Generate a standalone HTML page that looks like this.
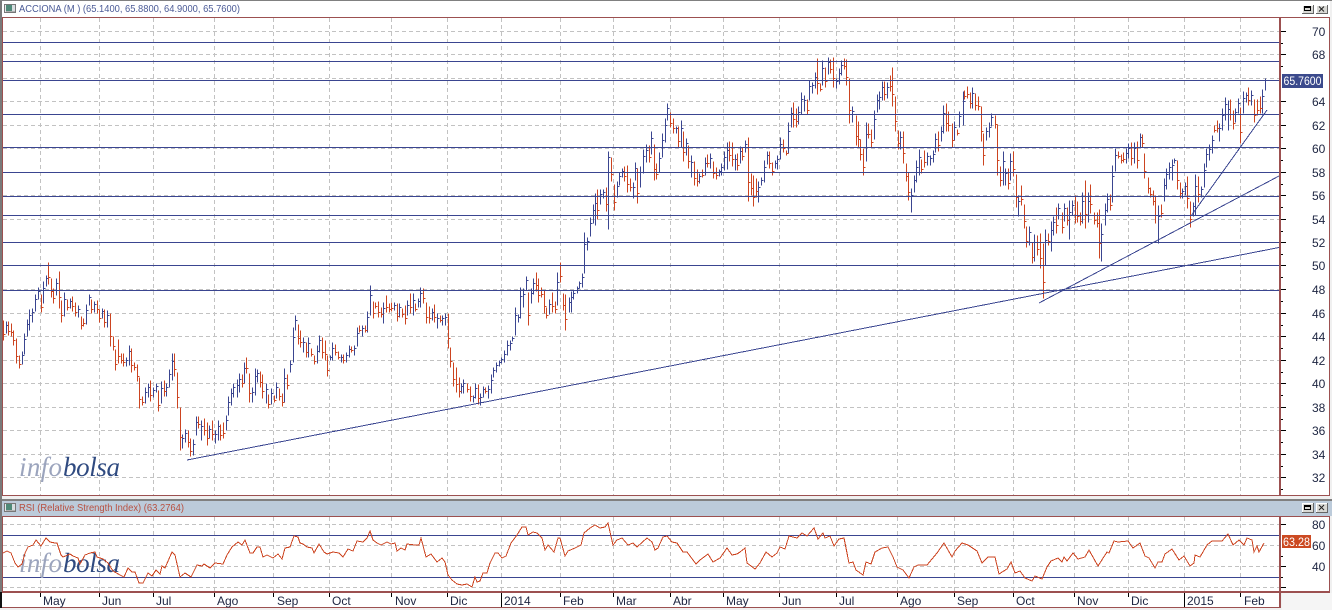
<!DOCTYPE html>
<html lang="es"><head><meta charset="utf-8"><title>ACCIONA</title>
<style>
html,body{margin:0;padding:0;background:#f0f0f0;width:1332px;height:610px;overflow:hidden}
svg{display:block;position:absolute;left:0;top:0;font-family:"Liberation Sans",sans-serif}
.ax{font-size:12px;fill:#1c2440}
.logo{font-family:"Liberation Serif",serif;font-style:italic;font-size:27px}
</style></head><body>
<svg width="1332" height="610" viewBox="0 0 1332 610" xmlns="http://www.w3.org/2000/svg">
<!-- panels -->
<rect x="0" y="0" width="1332" height="610" fill="#f0f0f0"/>
<rect x="0" y="0" width="1332" height="1" fill="#808080"/>
<rect x="0" y="1" width="1330" height="16" fill="#fff"/>
<rect x="2" y="17" width="1327" height="478" fill="#fff"/>
<rect x="0" y="499" width="1332" height="2" fill="#808080"/>
<rect x="0" y="501" width="1332" height="15" fill="#bccbda"/>
<rect x="2" y="517" width="1327" height="74" fill="#fff"/>
<rect x="2" y="593" width="1277" height="14" fill="#fff"/>
<!-- grid -->
<g stroke="#c2c2c2" stroke-width="1" fill="none" shape-rendering="crispEdges" stroke-dasharray="4 3">
<path d="M3 31.5H1279M3 54.5H1279M3 78.5H1279M3 101.5H1279M3 125.5H1279M3 148.5H1279M3 172.5H1279M3 195.5H1279M3 219.5H1279M3 242.5H1279M3 265.5H1279M3 289.5H1279M3 313.5H1279M3 336.5H1279M3 360.5H1279M3 383.5H1279M3 407.5H1279M3 430.5H1279M3 454.5H1279M3 477.5H1279"/>
<path d="M3 524.5H1279M3 545.5H1279M3 566.5H1279M3 587.5H1279"/>
<path d="M40.5 18V495M99.5 18V495M153.5 18V495M214.5 18V495M273.5 18V495M329.5 18V495M391.5 18V495M447.5 18V495M501.5 18V495M560.5 18V495M613.5 18V495M670.5 18V495M723.5 18V495M779.5 18V495M836.5 18V495M897.5 18V495M954.5 18V495M1013.5 18V495M1074.5 18V495M1128.5 18V495M1184.5 18V495M1240.5 18V495"/>
<path d="M40.5 517V591M99.5 517V591M153.5 517V591M214.5 517V591M273.5 517V591M329.5 517V591M391.5 517V591M447.5 517V591M501.5 517V591M560.5 517V591M613.5 517V591M670.5 517V591M723.5 517V591M779.5 517V591M836.5 517V591M897.5 517V591M954.5 517V591M1013.5 517V591M1074.5 517V591M1128.5 517V591M1184.5 517V591M1240.5 517V591"/>
</g>
<!-- logo main -->
<text class="logo" x="19" y="476" fill="#9ba4bd" textLength="43" lengthAdjust="spacing">info</text>
<text class="logo" x="63" y="476" fill="#2f4a80" textLength="57" lengthAdjust="spacing">bolsa</text>
<!-- bars -->
<g transform="translate(.5 .5)" fill="none" stroke-width="1" shape-rendering="crispEdges">
<path stroke="#3a4590" d="M6 321V333m0-8h2M22 351V364m0-9h2M24 333V354m0-15h2M27 319V336m0-12h2M29 309V330m0-15h2M32 308V322m0-10h2M35 294V311m0-12h2M38 287V299m0-8h2M43 281V303m0-15h2M46 275V286m0-8h2M56 278V295m0-12h2M64 292V316m0-17h2M70 298V308m0-7h2M78 305V317m0-8h2M86 304V324m0-14h2M89 294V305m0-8h2M94 301V312m0-8h2M102 308V318m0-7h2M107 310V327m0-12h2M126 357V366m0-6h2M129 345V365m0-14h2M145 387V403m0-11h2M148 383V397m0-10h2M153 387V397m0-7h2M156 383V392m0-6h2M161 381V403m0-15h2M166 383V396m0-9h2M169 369V387m0-13h2M172 353V380m0-19h2M182 434V448m0-10h2M185 429V442m0-9h2M193 439V455m0-11h2M196 416V435m0-13h2
M201 420V440m0-14h2M209 425V438m0-9h2M215 430V443m0-9h2M218 420V440m0-14h2M226 415V430m0-10h2M228 396V415m0-13h2M231 388V405m0-12h2M233 383V397m0-10h2M237 379V397m0-12h2M239 373V392m0-13h2M244 362V383m0-15h2M252 387V402m0-10h2M255 368V395m0-19h2M257 369V382m0-9h2M266 383V403m0-14h2M271 388V404m0-11h2M276 382V398m0-11h2M284 368V402m0-24h2M290 360V372m0-8h2M293 327V362m0-25h2M295 315V330m0-10h2M303 337V352m0-10h2M308 337V357m0-14h2M317 345V363m0-12h2M319 335V352m0-12h2M330 355V360m0-3h2M332 342V360m0-12h2M341 354V362m0-5h2M346 352V362m0-7h2M349 345V357m0-8h2M354 345V355m0-7h2M357 327V346m0-13h2M362 325V336m0-8h2M367 311V332m0-15h2M370 285V315m0-20h2M383 302V323m0-15h2M394 302V310m0-5h2M399 303V317m0-10h2M407 300V315m0-10h2M413 293V315m0-15h2M418 298V307m0-6h2M420 287V307m0-14h2M432 308V320m0-8h2M437 313V328m0-10h2M442 315V325m0-7h2M445 313V325m0-8h2M461 383V393m0-7h2M463 379V393m0-10h2M473 395V402m0-5h2M475 383V398m0-10h2M480 393V405m0-8h2M483 386V397m0-8h2M488 385V398m0-9h2M491 374V393m0-13h2M493 367V377m0-7h2M496 362V372m0-7h2M499 360V366m0-4h2
M501 357V363m0-4h2M504 350V362m0-8h2M507 340V355m0-10h2M510 340V350m0-7h2M512 336V341m0-3h2M515 307V335m0-20h2M518 314V322m0-5h2M520 287V318m0-22h2M523 288V307m0-13h2M526 276V290m0-10h2M531 288V303m0-10h2M533 278V294m0-11h2M549 299V314m0-10h2M557 272V305m0-23h2M569 297V312m0-10h2M571 291V312m0-15h2M573 290V299m0-6h2M577 286V293m0-5h2M579 281V288m0-5h2M582 273V287m0-10h2M584 232V273m0-29h2M587 237V250m0-9h2M590 217V236m0-13h2M593 204V223m0-13h2M595 193V225m0-22h2M600 189V204m0-10h2M603 189V198m0-6h2M608 151V229m0-72h2M617 181V197m0-11h2M619 172V185m0-9h2M622 168V177m0-6h2M633 182V198m0-11h2M635 162V180m0-12h2M640 166V187m0-15h2M643 149V173m0-17h2M646 144V162m0-12h2M651 131V154m0-16h2M659 152V172m0-14h2M662 133V157m0-17h2M665 118V142m0-17h2M667 103V120m0-12h2M676 126V133m0-5h2M681 120V147m0-19h2M686 138V155m0-12h2M691 155V177m0-15h2M699 173V183m0-7h2M705 157V175m0-12h2M710 153V168m0-10h2M719 169V176m0-5h2M721 163V175m0-8h2M724 151V170m0-13h2M727 142V169m0-19h2M735 154V170m0-11h2M740 146V163m0-12h2M745 140V152m0-8h2M758 181V202m0-15h2M761 177V185m0-5h2M764 160V182m0-15h2M767 151V164m0-9h2M775 160V168m0-5h2M777 155V169m0-10h2M780 137V159m0-15h2M788 122V153m0-22h2M791 107V127m0-14h2M798 106V124m0-12h2
M801 92V114m0-15h2M804 95V111m0-11h2M809 80V100m0-14h2M812 82V93m0-8h2M815 72V88m0-11h2M822 60V85m0-17h2M828 57V74m0-12h2M836 78V88m0-7h2M839 68V84m0-11h2M841 60V75m0-10h2M852 106V122m0-11h2M866 122V161m0-27h2M874 110V139m0-20h2M877 94V112m0-12h2M879 91V109m0-12h2M882 81V100m0-13h2M887 82V98m0-11h2M900 131V149m0-12h2M911 188V212m0-17h2M914 175V192m0-12h2M916 160V182m0-15h2M919 149V175m0-18h2M927 152V165m0-9h2M930 155V165m0-7h2M933 150V162m0-8h2M935 133V152m0-13h2M941 126V141m0-10h2M943 105V133m0-20h2M954 121V140m0-13h2M959 111V127m0-11h2M963 91V125m0-24h2M972 87V108m0-15h2M986 127V140m0-9h2M989 122V137m0-10h2M991 113V126m0-9h2M1003 151V185m0-24h2M1005 168V185m0-12h2M1010 153V180m0-19h2M1018 195V216m0-15h2
M1029 226V245m0-13h2M1034 234V261m0-19h2M1045 229V265m0-25h2M1051 221V251m0-21h2M1053 216V235m0-13h2M1058 203V219m0-11h2M1064 203V221m0-13h2M1069 200V239m0-27h2M1072 200V215m0-10h2M1082 192V223m0-22h2M1088 192V222m0-21h2M1101 223V261m0-27h2M1105 203V225m0-15h2M1107 193V212m0-13h2M1112 165V202m0-26h2M1115 148V171m0-16h2M1126 148V163m0-10h2M1128 143V158m0-10h2M1134 142V163m0-15h2M1140 133V147m0-10h2M1158 205V243m0-27h2M1164 178V201m0-16h2M1166 168V189m0-15h2M1169 162V179m0-12h2M1172 159V180m0-15h2M1174 158V163m0-3h2M1182 188V198m0-7h2M1185 182V195m0-9h2M1193 202V216m0-10h2M1195 174V215m0-29h2M1201 186V197m0-8h2M1204 163V187m0-17h2M1206 148V167m0-13h2M1209 144V160m0-11h2M1212 135V153m0-13h2M1219 123V141m0-13h2M1222 108V130m0-15h2M1225 97V120m0-16h2M1228 100V130m0-21h2M1235 108V122m0-10h2M1238 98V113m0-10h2M1243 91V113m0-15h2M1246 92V102m0-7h2M1251 90V105m0-10h2M1262 89V113m0-17h2M1265 78V90"/>
<path stroke="#cc4420" d="M3 320V340m0-6h2M8 321V335m0-4h2M11 323V336m0-4h2M13 330V345m0-5h2M16 338V363m0-7h2M19 355V368m0-4h2M41 294V312m0-5h2M48 262V284m0-7h2M51 278V297m0-6h2M53 288V303m0-5h2M59 271V308m0-11h2M61 300V322m0-7h2M67 299V310m0-3h2M72 296V311m0-5h2M75 302V316m0-4h2M81 316V329m0-4h2M83 318V326m0-3h2M91 299V313m0-4h2M97 300V313m0-4h2M99 309V322m0-4h2M104 309V327m0-5h2M110 313V346m0-10h2M113 336V350m0-4h2M115 349V370m0-6h2M118 339V363m0-7h2M121 353V363m0-3h2M123 353V366m0-4h2M131 348V372m0-7h2M134 362V370m0-3h2M137 364V381m0-5h2M139 377V408m0-9h2M142 396V405m0-3h2M150 380V401m0-6h2M158 390V411m0-6h2M164 380V396m0-5h2M174 353V376m0-7h2M177 372V408m0-11h2M180 407V450m0-13h2M188 430V447m0-5h2M190 438V456m0-5h2M198 416V428m0-4h2
M204 418V435m0-5h2M207 422V445m0-7h2M212 420V440m0-6h2M220 424V440m0-5h2M223 422V438m0-5h2M242 374V387m0-4h2M246 357V373m0-5h2M249 373V402m0-9h2M260 371V387m0-5h2M262 374V398m0-7h2M268 394V408m0-4h2M274 395V402m0-2h2M279 388V400m0-4h2M282 393V406m0-4h2M287 374V389m0-4h2M298 324V344m0-6h2M300 330V347m0-5h2M306 342V357m0-5h2M311 348V356m0-2h2M314 355V364m0-3h2M322 337V358m0-6h2M325 340V360m0-6h2M327 355V376m0-6h2M335 344V355m0-3h2M338 351V359m0-2h2M343 354V363m0-3h2M351 346V352m0-2h2M359 325V332m0-2h2M365 325V332m0-2h2M373 301V318m0-5h2M375 302V308m0-2h2M378 301V317m0-5h2M381 307V317m0-3h2M386 295V312m0-5h2M389 303V312m0-3h2M391 302V311m0-3h2M397 303V321m0-5h2M402 308V317m0-3h2M405 305V324m0-6h2M410 293V313m0-6h2M415 303V311m0-2h2M423 288V303m0-5h2M426 302V323m0-6h2M429 306V323m0-5h2M434 304V322m0-5h2M440 315V322m0-2h2M448 313V348m0-10h2M450 347V367m0-6h2M453 362V386m0-7h2M456 367V392m0-8h2M459 377V397m0-6h2M467 383V392m0-3h2M470 386V401m0-5h2M478 384V404m0-6h2M485 387V393m0-2h2
M528 292V325m0-10h2M536 272V291m0-6h2M538 278V302m0-7h2M541 287V297m0-3h2M544 290V313m0-7h2M546 307V318m0-3h2M552 292V312m0-6h2M555 301V313m0-4h2M560 262V282m0-6h2M563 293V310m0-5h2M565 294V330m0-11h2M597 189V219m0-9h2M606 187V211m0-7h2M611 157V181m0-7h2M614 184V210m0-8h2M624 166V181m0-5h2M627 165V192m0-8h2M630 178V191m0-4h2M637 168V203m0-10h2M649 145V162m0-5h2M654 144V180m0-11h2M656 163V179m0-5h2M670 112V127m0-4h2M673 118V133m0-5h2M678 126V147m0-6h2M683 131V161m0-9h2M688 145V168m0-7h2M694 161V185m0-7h2M697 169V186m0-5h2M702 169V177m0-2h2M707 154V167m0-4h2M713 161V178m0-5h2M716 167V179m0-4h2M729 141V161m0-6h2M732 142V166m0-7h2M737 153V170m0-5h2M742 147V160m0-4h2M748 137V201m0-19h2M751 173V195m0-7h2M753 175V206m0-9h2M756 178V197m0-6h2M769 151V168m0-5h2M772 162V175m0-4h2M783 139V152m0-4h2M786 150V155m0-2h2M793 102V127m0-8h2M796 108V127m0-6h2
M807 99V114m0-4h2M817 58V94m0-11h2M820 83V91m0-2h2M825 67V87m0-6h2M830 59V73m0-4h2M833 57V87m0-9h2M844 58V69m0-3h2M846 59V85m0-8h2M849 78V123m0-13h2M856 115V145m0-9h2M858 121V147m0-8h2M860 139V160m0-6h2M863 148V175m0-8h2M868 123V138m0-4h2M871 129V147m0-5h2M884 81V100m0-6h2M890 75V91m0-5h2M892 67V106m0-12h2M895 96V131m0-10h2M898 130V149m0-6h2M903 131V163m0-10h2M906 163V181m0-5h2M908 172V200m0-8h2M921 159V173m0-4h2M924 150V167m0-5h2M938 131V151m0-6h2M946 103V131m0-8h2M948 111V131m0-6h2M952 123V147m0-7h2M957 129V135m0-2h2M964 90V99m0-3h2M967 86V98m0-4h2M970 92V108m0-5h2M975 93V110m0-5h2M978 96V110m0-4h2M981 106V141m0-10h2M983 133V165m0-10h2M995 115V128m0-4h2M997 124V175m0-15h2M1000 166V186m0-6h2M1008 168V189m0-6h2M1013 151V176m0-7h2M1016 174V207m0-10h2M1021 185V205m0-6h2M1024 204V228m0-7h2
M1026 226V247m0-6h2M1032 242V263m0-6h2M1037 235V255m0-6h2M1040 233V268m0-10h2M1043 243V298m0-16h2M1048 233V245m0-4h2M1056 207V233m0-8h2M1062 212V233m0-6h2M1067 207V225m0-5h2M1075 195V223m0-8h2M1077 201V222m0-6h2M1080 212V225m0-4h2M1085 180V228m0-14h2M1090 184V213m0-9h2M1094 212V224m0-4h2M1097 212V227m0-4h2M1099 209V258m0-15h2M1110 194V210m0-5h2M1118 151V158m0-2h2M1121 154V163m0-3h2M1123 152V162m0-3h2M1131 142V165m0-7h2M1137 141V168m0-8h2M1142 134V147m0-4h2M1144 153V178m0-7h2M1148 177V193m0-5h2M1150 187V197m0-3h2M1153 190V205m0-4h2M1155 195V223m0-8h2M1161 204V217m0-4h2M1177 160V189m0-9h2M1180 182V198m0-5h2M1187 176V208m0-10h2M1190 201V227m0-8h2M1198 176V202m0-8h2M1214 125V132m0-2h2M1217 120V132m0-4h2M1230 99V120m0-6h2M1233 110V129m0-6h2M1240 107V143m0-11h2M1248 87V105m0-5h2M1254 99V122m0-7h2M1257 99V115m0-5h2M1260 96V113m0-5h2"/>
</g>
<!-- horizontal levels and trend lines -->
<g fill="none" stroke="#3a4590" stroke-width="1" shape-rendering="crispEdges">
<path d="M3 42.5H1279M3 61.5H1279M3 80.5H1279M3 114.5H1279M3 147.5H1279M3 172.5H1279M3 196.5H1279M3 215.5H1279M3 242.5H1279M3 265.5H1279M3 290.5H1279"/>
<path d="M187 460L1279 247.5M1039 303L1279 176M1191 216L1267 110"/>
<path d="M3 535.5H1279M3 577.5H1279"/>
</g>
<!-- RSI logo -->
<text class="logo" x="19" y="572" fill="#9ba4bd" textLength="43" lengthAdjust="spacing">info</text>
<text class="logo" x="63" y="572" fill="#2f4a80" textLength="57" lengthAdjust="spacing">bolsa</text>
<!-- RSI -->
<polyline fill="none" stroke="#cc4420" stroke-width="1" shape-rendering="crispEdges" points="3,553 7,551 11,553 15,563 18,567 22,564 25,553 28,547 33,545 36,540 41,546 46,538 50,542 55,543 57,543 61,555 63,557 70,554 73,556 78,558 80,564 85,555 90,553 95,552 97,557 103,559 108,563 113,571 120,575 124,577 128,568 132,572 135,572 139,583 143,583 148,573 152,576 156,570 160,574 162,566 165,568 172,552 175,555 180,577 185,573 191,577 197,565 202,566 204,564 210,568 215,563 223,564 227,555 232,547 238,542 242,545 245,540 250,553 253,553 257,547 260,547 263,557 267,555 273,558 278,554 282,559 285,548 290,547 294,536 298,537 300,543 303,544 307,547 312,548 314,553 319,544 324,552 327,554 333,552 339,553 343,557 348,549 353,551 357,541 363,542 367,538 370,531 373,540 377,543 381,545 387,542 391,544 395,543 397,551 401,548 405,550 407,544 415,545 419,545 421,538 426,557 431,554 437,562 442,558 445,562 448,575 452,580 457,584 462,585 467,584 472,587 475,577 477,582 480,581 483,573 487,573 490,563 495,553 498,553 502,558 506,556 511,543 517,535 522,527 526,527 528,535 533,532 537,533 542,538 545,550 548,545 554,552 558,538 560,538 565,556 568,551 575,548 581,545 584,533 590,528 595,525 600,528 605,527 608,523 613,545 617,540 622,538 628,545 633,543 637,547 647,538 652,542 655,550 658,548 663,537 667,536 672,542 677,543 683,552 687,552 696,564 700,560 708,554 713,562 720,558 727,548 732,555 737,554 740,552 745,548 747,563 755,569 760,563 766,552 772,557 777,553 780,547 785,549 789,536 797,538 802,533 807,536 814,528 818,539 823,533 825,538 830,536 834,546 839,539 844,538 849,563 853,562 856,570 863,575 866,562 871,564 875,552 882,548 888,547 893,557 897,567 903,570 909,578 914,567 918,565 927,565 937,553 944,543 952,557 955,551 962,543 968,545 977,551 982,563 988,557 995,557 999,574 1007,569 1011,562 1015,573 1020,571 1025,578 1032,581 1035,576 1042,579 1047,567 1051,561 1058,558 1062,562 1064,557 1067,561 1073,553 1078,559 1085,557 1089,550 1098,566 1107,552 1109,553 1114,541 1118,542 1128,541 1133,548 1140,543 1145,556 1149,558 1155,568 1158,562 1162,562 1165,554 1172,549 1179,560 1184,556 1190,566 1194,563 1195,555 1200,557 1207,545 1212,541 1222,541 1228,534 1233,545 1239,540 1244,545 1247,538 1252,540 1254,552 1257,546 1259,552 1264,543"/>
<!-- borders -->
<g fill="#9c5050" shape-rendering="crispEdges">
<rect x="0" y="17" width="1330" height="1"/>
<rect x="0" y="495" width="1330" height="1"/>
<rect x="0" y="516" width="1330" height="1"/>
<rect x="0" y="591" width="1330" height="2"/>
<rect x="2" y="607" width="1278" height="1"/>
<rect x="1279" y="17" width="2" height="478"/>
<rect x="1279" y="516" width="2" height="92"/>
<rect x="1329" y="17" width="1" height="478"/>
<rect x="1329" y="516" width="1" height="76"/>
<rect x="2" y="17" width="1" height="478"/>
<rect x="2" y="516" width="1" height="76"/>
</g>
<rect x="0" y="1" width="2" height="591" fill="#7a7a7a"/>
<rect x="0" y="592" width="2" height="16" fill="#111"/>
<rect x="1282" y="593" width="50" height="17" fill="#f5f5f5"/>
<!-- axis ticks -->
<path fill="none" stroke="#000" stroke-width="1" shape-rendering="crispEdges" d="M1281 31.5h5M1281 54.5h5M1281 101.5h5M1281 125.5h5M1281 148.5h5M1281 172.5h5M1281 195.5h5M1281 219.5h5M1281 242.5h5M1281 265.5h5M1281 289.5h5M1281 313.5h5M1281 336.5h5M1281 360.5h5M1281 383.5h5M1281 407.5h5M1281 430.5h5M1281 454.5h5M1281 477.5h5M1281 43.5h2M1281 66.5h2M1281 113.5h2M1281 137.5h2M1281 160.5h2M1281 184.5h2M1281 207.5h2M1281 231.5h2M1281 254.5h2M1281 277.5h2M1281 301.5h2M1281 325.5h2M1281 348.5h2M1281 372.5h2M1281 395.5h2M1281 419.5h2M1281 442.5h2M1281 466.5h2M1281 489.5h2M1281 524.5h5M1281 566.5h5M1281 587.5h5M1281 556.5h2M1281 577.5h2
M40.5 593v4M99.5 593v4M153.5 593v4M214.5 593v4M273.5 593v4M329.5 593v4M391.5 593v4M447.5 593v4M501.5 593v14M560.5 593v4M613.5 593v4M670.5 593v4M723.5 593v4M779.5 593v4M836.5 593v4M897.5 593v4M954.5 593v4M1013.5 593v4M1074.5 593v4M1128.5 593v4M1184.5 593v14M1240.5 593v4"/>
<!-- y labels -->
<g>
<text class="ax" x="1312" y="36">70</text><text class="ax" x="1312" y="59">68</text><text class="ax" x="1312" y="106">64</text><text class="ax" x="1312" y="130">62</text><text class="ax" x="1312" y="153">60</text><text class="ax" x="1312" y="177">58</text><text class="ax" x="1312" y="200">56</text><text class="ax" x="1312" y="224">54</text><text class="ax" x="1312" y="247">52</text><text class="ax" x="1312" y="270">50</text><text class="ax" x="1312" y="294">48</text><text class="ax" x="1312" y="318">46</text><text class="ax" x="1312" y="341">44</text><text class="ax" x="1312" y="365">42</text><text class="ax" x="1312" y="388">40</text><text class="ax" x="1312" y="412">38</text><text class="ax" x="1312" y="435">36</text><text class="ax" x="1312" y="459">34</text><text class="ax" x="1312" y="482">32</text>
<text class="ax" x="1312" y="529">80</text><text class="ax" x="1312" y="550">60</text><text class="ax" x="1312" y="571">40</text>
</g>
<!-- tags -->
<rect x="1282" y="74" width="41" height="14" fill="#3b4a8c"/>
<text x="1283.5" y="85" font-size="12" fill="#fff" textLength="38" lengthAdjust="spacingAndGlyphs">65.7600</text>
<rect x="1282" y="535" width="29" height="13" fill="#cc4a22"/>
<text x="1283" y="546" font-size="12" fill="#fff" textLength="27" lengthAdjust="spacingAndGlyphs">63.28</text>
<!-- x labels -->
<g>
<text class="ax" x="43" y="605">May</text><text class="ax" x="102" y="605">Jun</text><text class="ax" x="156" y="605">Jul</text><text class="ax" x="217" y="605">Ago</text><text class="ax" x="277" y="605">Sep</text><text class="ax" x="332" y="605">Oct</text><text class="ax" x="395" y="605">Nov</text><text class="ax" x="450" y="605">Dic</text><text class="ax" x="504" y="605">2014</text><text class="ax" x="563" y="605">Feb</text><text class="ax" x="616" y="605">Mar</text><text class="ax" x="673" y="605">Abr</text><text class="ax" x="726" y="605">May</text><text class="ax" x="782" y="605">Jun</text><text class="ax" x="839" y="605">Jul</text><text class="ax" x="900" y="605">Ago</text><text class="ax" x="957" y="605">Sep</text><text class="ax" x="1016" y="605">Oct</text><text class="ax" x="1077" y="605">Nov</text><text class="ax" x="1131" y="605">Dic</text><text class="ax" x="1187" y="605">2015</text><text class="ax" x="1244" y="605">Feb</text>
</g>
<!-- titles -->
<text x="19" y="12" font-size="10.5" fill="#4a5a96" textLength="221" lengthAdjust="spacingAndGlyphs">ACCIONA (M ) (65.1400, 65.8800, 64.9000, 65.7600)</text>
<text x="19" y="511" font-size="10.5" fill="#b85040" textLength="165" lengthAdjust="spacingAndGlyphs">RSI (Relative Strength Index) (63.2764)</text>
<!-- title icons -->
<g shape-rendering="crispEdges">
<rect x="4.500" y="4.500" width="11" height="8" fill="#e8e8e8" stroke="#777" stroke-width="1"/>
<rect x="6" y="5" width="6" height="6" fill="#4f8a78"/><rect x="12" y="5" width="3" height="6" fill="#d8dde0"/><rect x="6" y="11" width="9" height="1" fill="#b0b0b0"/>
<rect x="4.500" y="503.500" width="11" height="8" fill="#e8e8e8" stroke="#777" stroke-width="1"/>
<rect x="6" y="504" width="6" height="6" fill="#4f8a78"/><rect x="12" y="504" width="3" height="6" fill="#d8dde0"/><rect x="6" y="510" width="9" height="1" fill="#b0b0b0"/>
</g>
<!-- window buttons -->
<g shape-rendering="crispEdges">
<rect x="1302" y="5" width="11" height="8" fill="#d8d8d4"/><path d="M1302.500 13V5.500H1313" fill="none" stroke="#fff"/><path d="M1302 13.500H1313.500V5" fill="none" stroke="#666"/>
<rect x="1304.500" y="6.500" width="6" height="4" fill="none" stroke="#000" stroke-width="1"/><rect x="1304" y="6" width="7" height="2" fill="#000"/>
<rect x="1316" y="5" width="11" height="8" fill="#d8d8d4"/><path d="M1316.500 13V5.500H1327" fill="none" stroke="#fff"/><path d="M1316 13.500H1327.500V5" fill="none" stroke="#666"/>
<rect x="1302" y="503" width="11" height="9" fill="#d8d8d4"/><path d="M1302.500 512V503.500H1313" fill="none" stroke="#fff"/><path d="M1302 512.500H1313.500V503" fill="none" stroke="#666"/>
<rect x="1304.500" y="505.500" width="6" height="4" fill="none" stroke="#000" stroke-width="1"/><rect x="1304" y="505" width="7" height="2" fill="#000"/>
<rect x="1316" y="503" width="11" height="9" fill="#d8d8d4"/><path d="M1316.500 512V503.500H1327" fill="none" stroke="#fff"/><path d="M1316 512.500H1327.500V503" fill="none" stroke="#666"/>
</g>
<path d="M1319 6.500l5 5M1324 6.500l-5 5M1319 505l5 5M1324 505l-5 5" stroke="#222" stroke-width="1" fill="none"/>
</svg>
</body></html>
